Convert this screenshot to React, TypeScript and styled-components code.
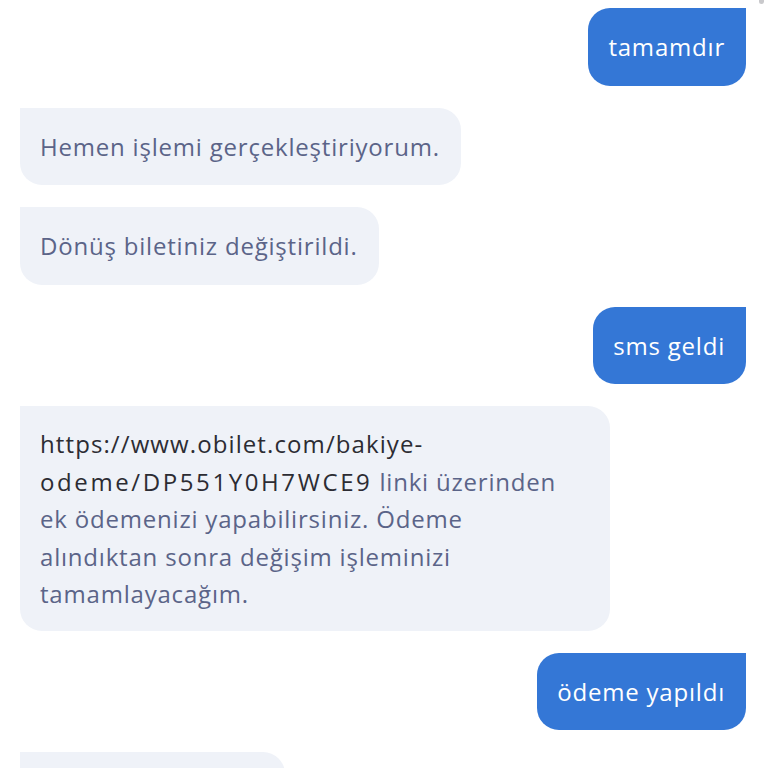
import React from 'react'
import styled, { createGlobalStyle } from 'styled-components'

const GlobalStyle = createGlobalStyle`
    html, body {
        margin: 0;
        padding: 0;
        background: #ffffff;
        overflow: hidden;
    }
    body {
        font-family: "Open Sans", Lato, sans-serif;
    }
`

const Thread = styled.div`
    display: flex;
    flex-direction: column;
    gap: 22px;
    padding: 8px 22px 0 20px;
    height: 768px;
    box-sizing: border-box;
    overflow: hidden;
`

const Row = styled.div<{ mine?: boolean }>`
    display: flex;
    justify-content: ${props => (props.mine ? 'flex-end' : 'flex-start')};
`

const Bubble = styled.div<{ mine?: boolean }>`
    box-sizing: border-box;
    padding: 20px 21px 20px 20px;
    font-size: 24px;
    line-height: 37.5px;
    letter-spacing: 0.8px;
    white-space: nowrap;
    color: ${props => (props.mine ? '#ffffff' : '#5b6488')};
    background: ${props => (props.mine ? '#3477d6' : '#eff2f8')};
    border-radius: ${props => (props.mine ? '22px 0 22px 22px' : '0 22px 22px 22px')};
`

const Wide = styled(Bubble)`
    width: 590px;
    padding: 19px 20px 18px;
`

const Url = styled.span<{ code?: boolean }>`
    color: #2c2c33;
    letter-spacing: ${props => (props.code ? '2.6px' : '1.1px')};
`

const Stub = styled.div`
    width: 265px;
    height: 40px;
    background: #eff2f8;
    border-radius: 0 22px 0 0;
`

const ScrollDot = styled.div`
    position: absolute;
    top: 0;
    right: 4px;
    width: 5px;
    height: 4px;
    border-radius: 0 0 3px 3px;
    background: #c9c9cc;
`

export default function App() {
    return (
        <>
            <GlobalStyle />
            <ScrollDot />
            <Thread>
                <Row mine>
                    <Bubble mine>tamamdır</Bubble>
                </Row>
                <Row>
                    <Bubble>Hemen işlemi gerçekleştiriyorum.</Bubble>
                </Row>
                <Row>
                    <Bubble>Dönüş biletiniz değiştirildi.</Bubble>
                </Row>
                <Row mine>
                    <Bubble mine>sms geldi</Bubble>
                </Row>
                <Row>
                    <Wide>
                        <Url>https://www.obilet.com/bakiye-</Url>
                        <br />
                        <Url code>odeme/DP551Y0H7WCE9</Url> linki üzerinden
                        <br />
                        ek ödemenizi yapabilirsiniz. Ödeme
                        <br />
                        alındıktan sonra değişim işleminizi
                        <br />
                        tamamlayacağım.
                    </Wide>
                </Row>
                <Row mine>
                    <Bubble mine>ödeme yapıldı</Bubble>
                </Row>
                <Row>
                    <Stub />
                </Row>
            </Thread>
        </>
    )
}
